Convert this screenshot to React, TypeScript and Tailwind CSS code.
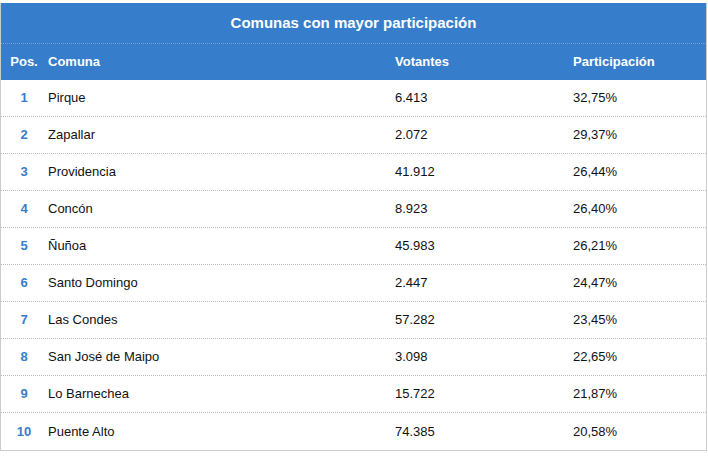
const rows: [string, string, string][] = [
  ["Pirque", "6.413", "32,75%"],
  ["Zapallar", "2.072", "29,37%"],
  ["Providencia", "41.912", "26,44%"],
  ["Concón", "8.923", "26,40%"],
  ["Ñuñoa", "45.983", "26,21%"],
  ["Santo Domingo", "2.447", "24,47%"],
  ["Las Condes", "57.282", "23,45%"],
  ["San José de Maipo", "3.098", "22,65%"],
  ["Lo Barnechea", "15.722", "21,87%"],
  ["Puente Alto", "74.385", "20,58%"],
];

export default function App() {
  return (
    <div className="w-[708px] h-[460px] bg-white pt-[3px] text-[13px]" style={{ fontFamily: '"Liberation Sans", Arial, sans-serif' }}>
      <div className="w-[707px] border-l border-r border-b border-[#cccccc]">
        <div className="bg-[#367dcc] text-white font-bold">
          <div className="h-[41px] flex items-center justify-center text-[15px] border-b border-dotted border-[#6fa3e0]">Comunas con mayor participación</div>
          <div className="h-[36px] flex items-center">
            <div className="w-[46px] text-center">Pos.</div>
            <div className="w-[348px] pl-[1px]">Comuna</div>
            <div className="w-[178px]">Votantes</div>
            <div>Participación</div>
          </div>
        </div>
        {rows.map((r, i) => (
          <div key={i} className={`h-[37px] flex items-center text-[#111] ${i < rows.length - 1 ? "border-b border-dotted border-[#bbbbbb]" : ""}`}>
            <div className="w-[46px] text-center font-bold text-[#367dcc]">{i + 1}</div>
            <div className="w-[348px] pl-[1px]">{r[0]}</div>
            <div className="w-[178px]">{r[1]}</div>
            <div>{r[2]}</div>
          </div>
        ))}
      </div>
    </div>
  );
}
